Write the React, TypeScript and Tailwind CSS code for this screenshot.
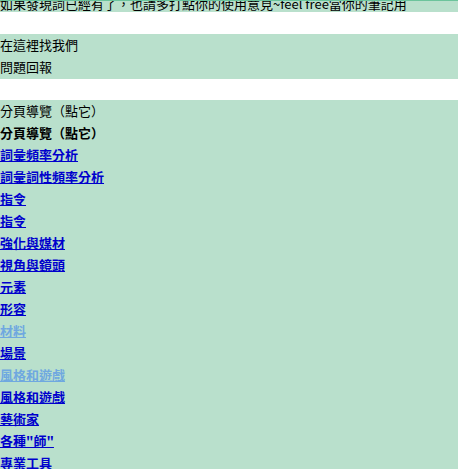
const links = [
  { text: "詞彙頻率分析" },
  { text: "詞彙詞性頻率分析" },
  { text: "指令" },
  { text: "指令" },
  { text: "強化與媒材" },
  { text: "視角與鏡頭" },
  { text: "元素" },
  { text: "形容" },
  { text: "材料", visited: true },
  { text: "場景" },
  { text: "風格和遊戲", visited: true },
  { text: "風格和遊戲" },
  { text: "藝術家" },
  { text: '各種"師"' },
  { text: "專業工具" },
];

export default function App() {
  return (
    <div
      className="h-[469px] w-[458px] overflow-hidden bg-white text-[13px] leading-[22px] text-black"
      style={{ fontFamily: '"Noto Sans CJK TC", "Noto Sans", sans-serif' }}
    >
      <div className="h-[12px] overflow-hidden border-t border-[#6cc49c] bg-[#b9e0cc]">
        <div className="-mt-[8px] whitespace-nowrap">
          如果發現詞已經有了，也請多打點你的使用意見~feel free當你的筆記用
        </div>
      </div>

      <div className="h-[22px]" />

      <div className="bg-[#b9e0cc] pb-px">
        <div>在這裡找我們</div>
        <div>問題回報</div>
      </div>

      <div className="h-[21px]" />

      <div className="h-full bg-[#b9e0cc]">
        <div>分頁導覽（點它）</div>
        <div className="font-bold">分頁導覽（點它）</div>
        {links.map((l, i) => (
          <div key={i}>
            <a
              href="#"
              className={
                l.visited
                  ? "font-bold text-[#6fa8e0] underline"
                  : "font-bold text-[#0000cc] underline"
              }
            >
              {l.text}
            </a>
          </div>
        ))}
      </div>
    </div>
  );
}
